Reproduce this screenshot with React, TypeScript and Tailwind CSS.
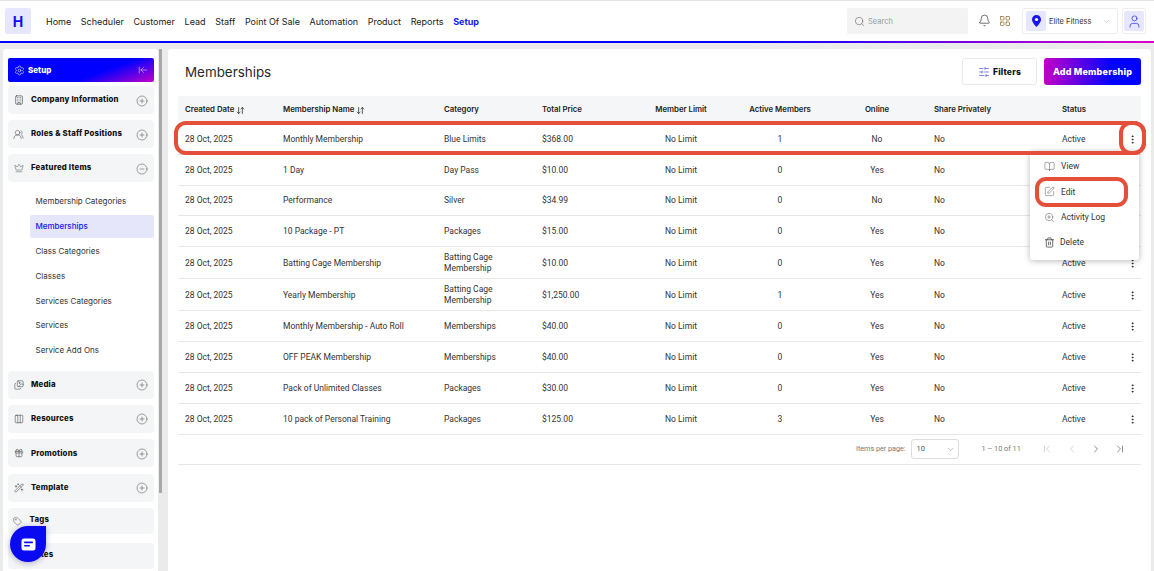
import React from "react";
import { Settings, ArrowLeftToLine, CirclePlus, CircleMinus, Crown, BookOpen, SquarePen, ZoomIn, Trash2, SlidersHorizontal, Bell, LayoutGrid, User, Search, ChevronDown, ChevronLeft, ChevronRight, ChevronFirst, ChevronLast, EllipsisVertical, ArrowDownUp, Tag, Gift, WandSparkles, Images, Building, UsersRound, Columns3 } from "lucide-react";

const nav = ["Home", "Scheduler", "Customer", "Lead", "Staff", "Point Of Sale", "Automation", "Product", "Reports"];
const rows = [
  ["Monthly Membership", "Blue Limits", "$368.00", "1", "No", 32],
  ["1 Day", "Day Pass", "$10.00", "0", "Yes", 31],
  ["Performance", "Silver", "$34.99", "0", "No", 30],
  ["10 Package - PT", "Packages", "$15.00", "0", "Yes", 31],
  ["Batting Cage Membership", "Batting Cage Membership", "$10.00", "0", "Yes", 32],
  ["Yearly Membership", "Batting Cage Membership", "$1,250.00", "1", "Yes", 32],
  ["Monthly Membership - Auto Roll", "Memberships", "$40.00", "0", "Yes", 31],
  ["OFF PEAK Membership", "Memberships", "$40.00", "0", "Yes", 31],
  ["Pack of Unlimited Classes", "Packages", "$30.00", "0", "Yes", 31],
  ["10 pack of Personal Training", "Packages", "$125.00", "3", "Yes", 31],
] as const;
const subs = ["Membership Categories", "Memberships", "Class Categories", "Classes", "Services Categories", "Services", "Service Add Ons"];

function Section({ icon, label, minus, plain }: { icon: React.ReactNode; label: string; minus?: boolean; plain?: boolean }) {
  return (
    <div className={`flex items-center bg-[#f4f5f7] rounded-[4px] ${plain ? "h-[26px] pl-[1.5px]" : "h-[28px] pl-[3px]"} pr-[6px] shrink-0`}>
      <span className="w-[15px] flex justify-center text-[#333]">{icon}</span>
      <span className={`ml-[5px] text-[7.8px] font-extrabold text-[#111] tracking-[0.2px] flex-1 ${plain ? "-mt-[2px]" : ""}`}>{label}</span>
      {!plain && (minus ? <CircleMinus size={12} strokeWidth={1} className="text-[#444] mt-[1px]" /> : <CirclePlus size={12} strokeWidth={1} className="text-[#444] mt-[1px]" />)}
    </div>
  );
}

function SortIcon() {
  return <ArrowDownUp size={9} strokeWidth={1.9} className="ml-[2px] text-[#222]" />;
}

export default function App() {
  return (
    <div className="relative w-[1154px] h-[571px] overflow-hidden bg-[#ebebeb] font-['Inter',sans-serif] text-[#222]">
      <header className="h-[43px] bg-white border-t border-[#e5e5e5] flex items-start relative">
        <div className="ml-[5px] mt-[7px] w-[26px] h-[26px] bg-[#e6e6ff] rounded-[2px] flex items-center justify-center text-[#1010e8] text-[14px] font-bold">H</div>
        <nav className="ml-[15px] mt-[15px] flex gap-[9.6px] text-[9px] leading-[12px] text-[#222]">
          {nav.map((n) => <span key={n}>{n}</span>)}
          <span className="text-[#1515f0] font-bold">Setup</span>
        </nav>
        <div className="ml-auto mt-[7px] flex items-start">
          <div className="w-[121px] h-[26px] bg-[#f3f3f3] rounded-[2px] flex items-center pl-[7px] text-[#555]">
            <Search size={11} strokeWidth={1.2} />
            <span className="ml-[3px] pt-[1px] text-[7.5px] text-[#999]">Search</span>
          </div>
          <Bell size={13} strokeWidth={1.2} className="ml-[10px] mt-[6px] text-[#222]" />
          <LayoutGrid size={12} strokeWidth={1.3} className="ml-[8px] mt-[7px] text-[#8a5a20]" />
          <div className="ml-[11px] w-[96px] h-[26px] border border-[#eee] rounded-[2px] flex items-center pl-[3px]">
            <span className="w-[20px] h-[20px] bg-[#e6e6ff] rounded-[2px] flex items-center justify-center">
              <svg width="9" height="12" viewBox="0 0 9 12">
                <path d="M4.5 0A4.5 4.5 0 0 0 0 4.5C0 7.5 4.5 12 4.5 12S9 7.5 9 4.5A4.5 4.5 0 0 0 4.5 0z" fill="#1515f0" />
                <circle cx="4.5" cy="4.5" r="1.6" fill="white" />
              </svg>
            </span>
            <span className="ml-[3px] pt-[1px] text-[7.5px] text-[#333]">Elite Fitness</span>
            <ChevronDown size={9} strokeWidth={1} className="ml-auto mr-[6px] text-[#888]" />
          </div>
          <div className="ml-[4px] mr-[8px] w-[24px] h-[26px] border border-[#eee] rounded-[2px] flex items-center justify-center">
            <span className="w-[20px] h-[20px] bg-[#e6e6ff] rounded-[2px] flex items-center justify-center">
              <User size={15} strokeWidth={1.1} className="text-[#2525e0]" />
            </span>
          </div>
        </div>
        <div className="absolute left-0 right-0 bottom-0 h-[2px] bg-[linear-gradient(90deg,#0000ff_65%,#e000c8_100%)]" />
      </header>

      <div className="flex items-stretch h-[528px] pt-[6px]">
        <aside className="ml-[3px] w-[155px] bg-white rounded-t-[3px] pt-[9px] pl-[5px] pr-[4px] flex flex-col overflow-hidden">
          <div className="h-[24px] shrink-0 rounded-[2px] bg-[linear-gradient(160deg,#0000ff_62%,#c400c8_100%)] flex items-center pl-[6px] pr-[6px] text-white">
            <Settings size={11} strokeWidth={1.2} />
            <span className="ml-[3px] text-[8px] font-extrabold">Setup</span>
            <ArrowLeftToLine size={10} strokeWidth={1.2} className="ml-auto" />
          </div>
          <div className="mt-[4px] flex flex-col gap-[6px]">
            <Section icon={<Building size={10} strokeWidth={1.4} />} label="Company Information" />
            <Section icon={<UsersRound size={11} strokeWidth={1} />} label="Roles & Staff Positions" />
            <Section icon={<Crown size={10} strokeWidth={1} />} label="Featured Items" minus />
          </div>
          <div className="mt-[8px] ml-[22px] flex flex-col">
            {subs.map((s) => (
              <div key={s} className={`h-[22.8px] mb-[2px] flex items-center pl-[5.5px] text-[8px] rounded-[2px] ${s === "Memberships" ? "bg-[#e6e6fb] text-[#1515f0] font-medium" : "text-[#333]"}`}>{s}</div>
            ))}
          </div>
          <div className="mt-[7px] flex flex-col gap-[6.4px]">
            <Section icon={<Images size={10} strokeWidth={1.2} />} label="Media" />
            <Section icon={<Columns3 size={10} strokeWidth={1.2} />} label="Resources" />
            <Section icon={<Gift size={10} strokeWidth={1.2} />} label="Promotions" />
            <Section icon={<WandSparkles size={10} strokeWidth={1.2} />} label="Template" />
            <Section icon={<Tag size={9} strokeWidth={1.2} />} label="Tags" plain />
            <div className="mt-[2px]"><Section icon={null} label="Notes" plain /></div>
          </div>
        </aside>
        <div className="w-[3px] ml-[1px] bg-[#a8a8a8] h-[444px]" />
        <main className="ml-[6px] mr-[3px] flex-1 bg-white rounded-t-[3px] pl-[10px] pr-[10px] pt-[9px]">
          <div className="flex items-center h-[27px]">
            <h1 className="ml-[7px] pt-[1px] text-[13.4px] font-normal text-[#2a2a2a]">Memberships</h1>
            <button className="ml-auto w-[75px] h-[27px] pt-[1px] border border-[#e8e8e8] rounded-[3px] flex items-center justify-center text-[8.5px] font-extrabold text-[#111] tracking-[0.2px]">
              <SlidersHorizontal size={12} strokeWidth={1.2} className="mr-[3px] text-[#3a3ae0]" />Filters
            </button>
            <button className="ml-[7px] w-[97px] h-[27px] pt-[1px] rounded-[3px] bg-[linear-gradient(90deg,#c400c8_0%,#0000ff_70%)] text-white text-[9px] font-extrabold tracking-[0.2px]">Add Membership</button>
          </div>
          <table className="mt-[11px] w-[963px] table-fixed border-collapse font-['Roboto',sans-serif] text-[8.5px] text-[#333]">
            <colgroup>
              <col className="w-[105px]" /><col className="w-[161px]" /><col className="w-[98px]" /><col className="w-[80px]" /><col className="w-[118px]" /><col className="w-[80px]" /><col className="w-[114px]" /><col className="w-[128px]" /><col className="w-[58px]" /><col className="w-[21px]" />
            </colgroup>
            <thead>
              <tr className="h-[26px] bg-[#f5f6f8] font-['Inter',sans-serif] text-[7.8px] font-semibold text-[#222] [&>th]:pt-[2px]">
                <th className="pl-[7px] text-left font-semibold"><span className="inline-flex items-center">Created Date<SortIcon /></span></th>
                <th className="text-left font-semibold"><span className="inline-flex items-center">Membership Name<SortIcon /></span></th>
                <th className="text-left font-semibold">Category</th>
                <th className="text-left font-semibold">Total Price</th>
                <th className="font-semibold">Member Limit</th>
                <th className="font-semibold">Active Members</th>
                <th className="font-semibold">Online</th>
                <th className="text-left font-semibold pl-[0px]">Share Privately</th>
                <th className="text-left font-semibold">Status</th>
                <th />
              </tr>
            </thead>
            <tbody>
              {rows.map((r, i) => (
                <tr key={i} className={`border-b border-[#e6e6e6] ${i === 0 ? "[&>td]:pt-[3px]" : i === 2 ? "[&>td]:pt-0" : "[&>td]:pt-[2px]"}`} style={{ height: r[5] }}>
                  <td className="pl-[7px]">28 Oct, 2025</td>
                  <td>{r[0]}</td>
                  <td className="leading-[11px] pr-[30px]">{r[1]}</td>
                  <td>{r[2]}</td>
                  <td className="text-center">No Limit</td>
                  <td className="text-center">{r[3]}</td>
                  <td className="text-center">{r[4]}</td>
                  <td>No</td>
                  <td>Active</td>
                  <td><EllipsisVertical size={11} strokeWidth={2} className="text-[#222] ml-[7px]" /></td>
                </tr>
              ))}
            </tbody>
          </table>
          <div className="w-[963px] h-[30px] border-b border-[#e6e6e6] flex items-center font-['Roboto',sans-serif] text-[#777]">
            <span className="ml-[678px] text-[7.2px]">Items per page:</span>
            <span className="ml-[5px] w-[48px] h-[20px] border border-[#ddd] rounded-[3px] flex items-center pl-[5px] text-[7.5px] text-[#555]">10<ChevronDown size={9} strokeWidth={1} className="ml-auto mr-[3px]" /></span>
            <span className="ml-[23px] text-[7.3px]">1 – 10 of 11</span>
            <ChevronFirst size={12} strokeWidth={1} className="ml-[20px] text-[#aaa]" />
            <ChevronLeft size={12} strokeWidth={1} className="ml-[13px] text-[#aaa]" />
            <ChevronRight size={12} strokeWidth={1.2} className="ml-[12px] text-[#444]" />
            <ChevronLast size={12} strokeWidth={1.2} className="ml-[12px] text-[#444]" />
          </div>
        </main>
      </div>

      {/* popup menu */}
      <div className="absolute left-[1030px] top-[151px] w-[109px] h-[109px] bg-white rounded-[3px] shadow-[0_1px_6px_rgba(0,0,0,0.28)] pt-[3px] font-['Roboto',sans-serif] text-[8.5px] text-[#333]">
        {([[BookOpen, "View", 1, 6], [SquarePen, "Edit", 1, 6], [ZoomIn, "Activity Log", 1, 6], [Trash2, "Delete", 1.7, 5]] as const).map(([Ico, t, w, m]) => (
          <div key={t} className="h-[25.3px] flex items-center pl-[14px]">
            <Ico size={11} strokeWidth={w} className="text-[#444]" />
            <span style={{ marginLeft: m }}>{t}</span>
          </div>
        ))}
      </div>

      {/* annotations */}
      <div className="absolute left-[174px] top-[121px] w-[972px] h-[34px] border-[4px] border-[#e44f3a] rounded-[12px]" />
      <div className="absolute left-[1119px] top-[121px] w-[27px] h-[34px] border-[4px] border-[#e44f3a] rounded-[12px]" />
      <div className="absolute left-[1035px] top-[177px] w-[93px] h-[30px] border-[4px] border-[#e44f3a] rounded-[11px]" />

      {/* chat bubble */}
      <div className="absolute left-[10px] top-[526px] w-[36px] h-[36px] rounded-full rounded-tr-[6px] bg-[#0a0af0] shadow-[0_1px_6px_rgba(0,0,80,0.3)] flex items-center justify-center">
        <svg width="15" height="13" viewBox="0 0 15 13">
          <path d="M3 0.5h9a2.5 2.5 0 0 1 2.5 2.5v7a2.5 2.5 0 0 1-2.5 2.5H3A2.5 2.5 0 0 1 .5 10V3A2.5 2.5 0 0 1 3 .5z" fill="white" />
          <rect x="3" y="3.6" width="9" height="1.6" rx="0.8" fill="#0a0af0" />
          <rect x="3" y="7" width="6" height="1.6" rx="0.8" fill="#0a0af0" />
        </svg>
      </div>
    </div>
  );
}
